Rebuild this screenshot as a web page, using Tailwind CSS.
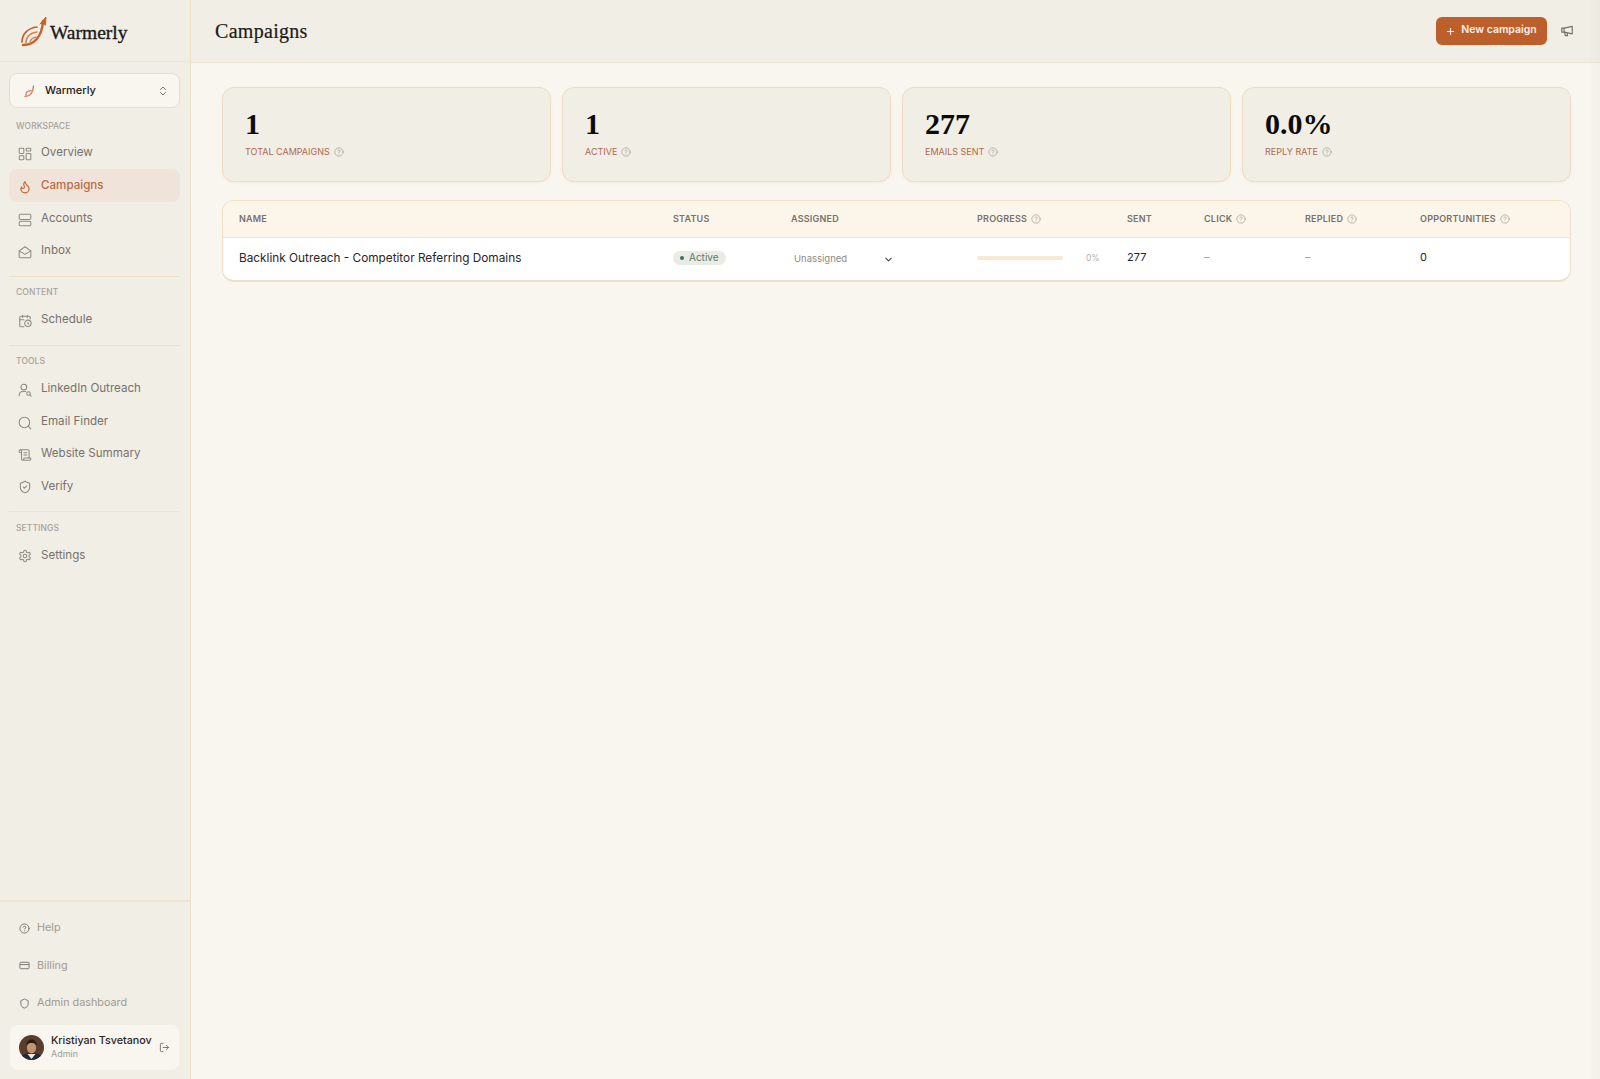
<!DOCTYPE html>
<html lang="en">
<head>
<meta charset="UTF-8" />
<title>Campaigns</title>
<script src="https://cdn.jsdelivr.net/npm/@tailwindcss/browser@4"></script>
</head>
<body class="relative h-[1079px] overflow-hidden bg-[#f9f6f0] font-['Inter',sans-serif] text-[#1c1917]">
<div class="flex h-full">
	<!-- Sidebar -->
	<aside class="flex w-[191px] shrink-0 flex-col border-r border-[#efdfc9] bg-[#f1eee6]">
		<div class="flex h-[62px] items-center gap-[2px] border-b border-[#ece4d5] pl-[20px] pt-[1px]">
			<svg class="h-[32px] w-[28px]" viewBox="0 0 28 32" fill="none" stroke-linecap="round">
				<path d="M3 30C14 30 22 22 23 6" stroke="#c2622d" stroke-width="2.4"/>
				<path d="M20 9l6-7-.5 8" fill="#c2622d" stroke="#c2622d" stroke-width="1"/>
				<path d="M2 27C2 19 8 13 17 12" stroke="#c2622d" stroke-width="1.7"/>
				<path d="M6 28C6 22 10 18 17 17" stroke="#d98556" stroke-width="1.5"/>
				<path d="M10 28C10 25 12 23 16 22" stroke="#d98556" stroke-width="1.3"/>
			</svg>
			<span class="mt-[3px] font-['Liberation_Serif',serif] text-[19.5px] leading-none text-[#1c1917] [-webkit-text-stroke:0.35px_#1c1917]">Warmerly</span>
		</div>

		<div class="flex flex-1 flex-col pl-[9px] pr-[10px] pt-[11px]">
			<button class="flex h-[35px] shrink-0 items-center rounded-lg border border-[#efdcc3] bg-[#f9f6f0] pl-[13px] pr-[10px] text-[11px] font-medium">
				<svg class="h-[14px] w-[14px]" viewBox="0 0 14 14" fill="none" stroke="#dc8466" stroke-linecap="round"><path d="M2 12.5C7 12.5 10 9 10.5 2" stroke-width="1.5"/><path d="M3 11.5C2.5 8.5 4.5 7 8 6.5" stroke-width="1.3"/></svg>
				<span class="mb-[1px] ml-[8px]">Warmerly</span>
				<svg class="ml-auto h-[12px] w-[12px]" viewBox="0 0 24 24" fill="none" stroke="#78716c" stroke-width="2" stroke-linecap="round" stroke-linejoin="round"><path d="m7 15 5 5 5-5"/><path d="m7 9 5-5 5 5"/></svg>
			</button>

			<div class="mt-[12px] pl-[7px] text-[8.5px] font-medium leading-[12px] tracking-[0.01em] text-[#a8a299]">WORKSPACE</div>
			<nav class="mt-[5px] flex flex-col gap-[0.4px] text-[11.6px] text-[#78716c]">
				<a class="flex h-[32px] items-center gap-[9px] pl-[9px]">
					<svg class="mt-[2px] h-[14px] w-[14px]" viewBox="0 0 24 24" fill="none" stroke="#8f8a82" stroke-width="1.8"><rect x="2" y="2" width="8" height="9" rx="1.5"/><rect x="14" y="2" width="8" height="5" rx="1.5"/><rect x="14" y="11" width="8" height="11" rx="1.5"/><rect x="2" y="15" width="8" height="7" rx="1.5"/></svg>
					Overview</a>
				<a class="flex h-[33px] items-center gap-[9px] rounded-lg bg-[#f0e4da] pl-[9px] font-medium text-[#bd6a45]">
					<svg class="mt-[2px] h-[14px] w-[14px]" viewBox="0 0 24 24" fill="none" stroke="#c2622d" stroke-width="2" stroke-linecap="round" stroke-linejoin="round"><path d="M8.5 14.5A2.5 2.5 0 0 0 11 12c0-1.38-.5-2-1-3-1.07-2.14-.22-4.05 2-6 .5 2.5 2 4.9 4 6.5 2 1.6 3 3.5 3 5.500a7 7 0 1 1-14 0c0-1.150.43-2.290 1-3a2.500 2.500 0 0 0 2.500 2.500z"/></svg>
					Campaigns</a>
				<a class="flex h-[32px] items-center gap-[9px] pl-[9px]">
					<svg class="mt-[2px] h-[14px] w-[14px]" viewBox="0 0 24 24" fill="none" stroke="#8f8a82" stroke-width="1.8"><rect x="2" y="2" width="20" height="9" rx="2.500"/><rect x="2" y="14" width="20" height="8" rx="2.500"/></svg>
					Accounts</a>
				<a class="flex h-[32px] items-center gap-[9px] pl-[9px]">
					<svg class="mt-[2px] h-[14px] w-[14px]" viewBox="0 0 24 24" fill="none" stroke="#8f8a82" stroke-width="1.8" stroke-linejoin="round"><path d="M2 10 12 3l10 7v10a2 2 0 0 1-2 2H4a2 2 0 0 1-2-2z"/><path d="m2 10 10 6 10-6"/></svg>
					Inbox</a>
			</nav>

			<div class="mt-[9px] border-t border-[#efdfc9]"></div>
			<div class="mt-[9px] pl-[7px] text-[8.5px] font-medium leading-[12px] tracking-[0.01em] text-[#a8a299]">CONTENT</div>
			<nav class="mt-[6px] text-[11.6px] text-[#78716c]">
				<a class="flex h-[32px] items-center gap-[9px] pl-[9px]">
					<svg class="mt-[2px] h-[14px] w-[14px]" viewBox="0 0 24 24" fill="none" stroke="#8f8a82" stroke-width="1.8" stroke-linecap="round" stroke-linejoin="round"><path d="M21 8V6a2 2 0 0 0-2-2H5a2 2 0 0 0-2 2v14a2 2 0 0 0 2 2h5"/><path d="M16 2v4M8 2v4M3 10h7"/><circle cx="17" cy="16" r="5.500"/><path d="M17 14v2.200l1.500 1"/></svg>
					Schedule</a>
			</nav>

			<div class="mt-[9px] border-t border-[#efdfc9]"></div>
			<div class="mt-[9px] pl-[7px] text-[8.5px] font-medium leading-[12px] tracking-[0.01em] text-[#a8a299]">TOOLS</div>
			<nav class="mt-[6px] flex flex-col gap-[0.4px] text-[11.6px] text-[#78716c]">
				<a class="flex h-[32px] items-center gap-[9px] pl-[9px]">
					<svg class="mt-[2px] h-[14px] w-[14px]" viewBox="0 0 24 24" fill="none" stroke="#8f8a82" stroke-width="1.8" stroke-linecap="round"><circle cx="10" cy="7" r="5"/><path d="M2 22c0-5 3-8 8-8 1 0 2 .1 3 .5"/><circle cx="18" cy="18" r="3"/><path d="m20.500 20.500 2 2"/></svg>
					LinkedIn Outreach</a>
				<a class="flex h-[32px] items-center gap-[9px] pl-[9px]">
					<svg class="mt-[2px] h-[14px] w-[14px]" viewBox="0 0 24 24" fill="none" stroke="#8f8a82" stroke-width="1.8" stroke-linecap="round"><circle cx="11" cy="11" r="9"/><path d="m22 22-4.500-4.500"/></svg>
					Email Finder</a>
				<a class="flex h-[32px] items-center gap-[9px] pl-[9px]">
					<svg class="mt-[2px] h-[14px] w-[14px]" viewBox="0 0 24 24" fill="none" stroke="#8f8a82" stroke-width="1.8" stroke-linecap="round" stroke-linejoin="round"><path d="M15 12h-5M15 8h-5M19 17V5a2 2 0 0 0-2-2H4"/><path d="M8 21h12a2 2 0 0 0 2-2v-1a1 1 0 0 0-1-1H11a1 1 0 0 0-1 1v1a2 2 0 1 1-4 0V5a2 2 0 1 0-4 0v2a1 1 0 0 0 1 1h3"/></svg>
					Website Summary</a>
				<a class="flex h-[32px] items-center gap-[9px] pl-[9px]">
					<svg class="mt-[2px] h-[14px] w-[14px]" viewBox="0 0 24 24" fill="none" stroke="#8f8a82" stroke-width="1.8" stroke-linecap="round" stroke-linejoin="round"><path d="M20 13c0 5-3.500 7.500-7.660 8.950a1 1 0 0 1-.67-.01C7.500 20.500 4 18 4 13V6a1 1 0 0 1 1-1c2 0 4.500-1.200 6.240-2.720a1.170 1.170 0 0 1 1.520 0C14.510 3.810 17 5 19 5a1 1 0 0 1 1 1z"/><path d="m9 12 2 2 4-4"/></svg>
					Verify</a>
			</nav>

			<div class="mt-[9px] border-t border-[#ece4d5]"></div>
			<div class="mt-[10px] pl-[7px] text-[8.5px] font-medium leading-[12px] tracking-[0.01em] text-[#a8a299]">SETTINGS</div>
			<nav class="mt-[5px] text-[11.6px] text-[#78716c]">
				<a class="flex h-[32px] items-center gap-[9px] pl-[9px]">
					<svg class="mt-[2px] h-[14px] w-[14px]" viewBox="0 0 24 24" fill="none" stroke="#8f8a82" stroke-width="1.8" stroke-linecap="round" stroke-linejoin="round"><path d="M12.220 2h-.44a2 2 0 0 0-2 2v.18a2 2 0 0 1-1 1.730l-.43.25a2 2 0 0 1-2 0l-.15-.08a2 2 0 0 0-2.730.73l-.22.380a2 2 0 0 0 .73 2.730l.15.1a2 2 0 0 1 1 1.720v.51a2 2 0 0 1-1 1.740l-.15.09a2 2 0 0 0-.73 2.730l.22.380a2 2 0 0 0 2.730.73l.15-.08a2 2 0 0 1 2 0l.43.25a2 2 0 0 1 1 1.730V20a2 2 0 0 0 2 2h.44a2 2 0 0 0 2-2v-.18a2 2 0 0 1 1-1.730l.43-.25a2 2 0 0 1 2 0l.15.08a2 2 0 0 0 2.730-.73l.22-.390a2 2 0 0 0-.73-2.730l-.15-.08a2 2 0 0 1-1-1.740v-.5a2 2 0 0 1 1-1.740l.15-.09a2 2 0 0 0 .73-2.730l-.22-.380a2 2 0 0 0-2.730-.73l-.15.08a2 2 0 0 1-2 0l-.43-.25a2 2 0 0 1-1-1.730V4a2 2 0 0 0-2-2z"/><circle cx="12" cy="12" r="3"/></svg>
					Settings</a>
			</nav>
		</div>

		<div class="border-t-2 border-[#f1e3d2] pl-[10px] pr-[11px] pb-[9px]">
			<div class="flex flex-col text-[10.8px] text-[#a09a90]">
				<a class="flex h-[37.500px] items-center gap-[7px] pl-[9px] pt-[16px]">
					<svg class="h-[11px] w-[11px]" viewBox="0 0 24 24" fill="none" stroke="#78716c" stroke-width="2" stroke-linecap="round"><circle cx="12" cy="12" r="10"/><path d="M9.100 9a3 3 0 0 1 5.800 1c0 2-3 3-3 3M12 17h.01"/></svg>
					Help</a>
				<a class="flex h-[37.500px] items-center gap-[7px] pl-[9px] pt-[16px]">
					<svg class="h-[11px] w-[11px]" viewBox="0 0 24 24" fill="none" stroke="#78716c" stroke-width="2"><rect x="2" y="5" width="20" height="14" rx="2"/><path d="M2 10h20"/></svg>
					Billing</a>
				<a class="flex h-[37.500px] items-center gap-[7px] pl-[9px] pt-[16px]">
					<svg class="h-[11px] w-[11px]" viewBox="0 0 24 24" fill="none" stroke="#78716c" stroke-width="2" stroke-linejoin="round"><path d="M20 13c0 5-3.500 7.500-7.660 8.950a1 1 0 0 1-.67-.01C7.500 20.500 4 18 4 13V6a1 1 0 0 1 1-1c2 0 4.500-1.200 6.240-2.720a1.170 1.170 0 0 1 1.520 0C14.510 3.810 17 5 19 5a1 1 0 0 1 1 1z"/></svg>
					Admin dashboard</a>
			</div>
			<div class="mt-[11px] flex h-[45px] items-center rounded-lg bg-[#f9f6f0] pl-[9px] pr-[9px]">
				<svg class="h-[25px] w-[25px] shrink-0 rounded-full" viewBox="0 0 25 25"><rect width="25" height="25" fill="#5b3d2c"/><path d="M0 25c1-5 6-7 12.500-7s11.500 2 12.500 7z" fill="#1f2b3a"/><path d="M8.500 19l4 5 4-5z" fill="#ece7df"/><ellipse cx="12.500" cy="12.500" rx="4.600" ry="6" fill="#c4936f"/><path d="M7.500 11c-.5-4 2-6.500 5-6.500s5.500 2.500 5 6.500c-1-2.500-3-3-5-3s-4 .5-5 3z" fill="#2b1b14"/></svg>
				<div class="mb-[2px] ml-[7px] min-w-0 leading-none">
					<div class="whitespace-nowrap text-[10.7px] font-medium leading-[14px] text-[#292524]">Kristiyan Tsvetanov</div>
					<div class="text-[9px] leading-[12px] text-[#a09a90]">Admin</div>
				</div>
				<svg class="ml-auto h-[11px] w-[11px] shrink-0" viewBox="0 0 24 24" fill="none" stroke="#78716c" stroke-width="2" stroke-linecap="round" stroke-linejoin="round"><path d="M9 21H5a2 2 0 0 1-2-2V5a2 2 0 0 1 2-2h4"/><path d="m16 17 5-5-5-5M21 12H9"/></svg>
			</div>
		</div>
	</aside>

	<!-- Main -->
	<main class="flex min-w-0 flex-1 flex-col">
		<header class="flex h-[63px] shrink-0 items-center justify-between border-b border-[#ece4d5] bg-[#f1eee6] pl-[24px] pr-[26px]">
			<h1 class="font-['Liberation_Serif',serif] text-[20px] tracking-[0.015em] text-[#1c1917] [-webkit-text-stroke:0.2px_#1c1917]">Campaigns</h1>
			<div class="flex items-center gap-[13px]">
				<button class="flex h-[28px] w-[111px] items-center justify-center gap-[6px] rounded-md bg-[#bd5f2b] text-[10.5px] font-semibold text-[#fbf4ec]">
					<svg class="mt-[1px] h-[9px] w-[9px]" viewBox="0 0 10 10" fill="none" stroke="#fbf4ec" stroke-width="1.200"><path d="M5 1v8M1 5h8"/></svg>
					<span class="mb-[2px]">New campaign</span></button>
				<svg class="h-[14px] w-[14px]" viewBox="0 0 24 24" fill="none" stroke="#78716c" stroke-width="2" stroke-linecap="round" stroke-linejoin="round"><path d="m21 4-14 3H3v7h4l14 3z"/><path d="M7 7v7M8 14l1 6h4l-1-5"/></svg>
			</div>
		</header>

		<div class="flex flex-1 flex-col gap-[18px] pl-[31px] pr-[29px] pt-[24px]">
			<!-- Stat cards -->
			<div class="grid grid-cols-4 gap-[11px]">
				<div class="h-[95px] rounded-[12px] border border-[#efdcc3] bg-[#f1eee6] pl-[22px] pt-[19px] shadow-sm shadow-[#f1e3d2]/40">
					<div class="-mt-[1px] font-['Liberation_Serif',serif] text-[30px] font-bold leading-[36px] text-[#0c0a09]">1</div>
					<div class="mt-[3px] flex items-center gap-[4px] text-[9px] text-[#b0694a]">TOTAL CAMPAIGNS
						<svg class="h-[10px] w-[10px]" viewBox="0 0 24 24" fill="none" stroke="#a8a299" stroke-width="1.800" stroke-linecap="round"><circle cx="12" cy="12" r="10"/><path d="M9.100 9a3 3 0 0 1 5.800 1c0 2-3 3-3 3M12 17h.01"/></svg></div>
				</div>
				<div class="h-[95px] rounded-[12px] border border-[#efdcc3] bg-[#f1eee6] pl-[22px] pt-[19px] shadow-sm shadow-[#f1e3d2]/40">
					<div class="-mt-[1px] font-['Liberation_Serif',serif] text-[30px] font-bold leading-[36px] text-[#0c0a09]">1</div>
					<div class="mt-[3px] flex items-center gap-[4px] text-[9px] text-[#b0694a]">ACTIVE
						<svg class="h-[10px] w-[10px]" viewBox="0 0 24 24" fill="none" stroke="#a8a299" stroke-width="1.800" stroke-linecap="round"><circle cx="12" cy="12" r="10"/><path d="M9.100 9a3 3 0 0 1 5.800 1c0 2-3 3-3 3M12 17h.01"/></svg></div>
				</div>
				<div class="h-[95px] rounded-[12px] border border-[#efdcc3] bg-[#f1eee6] pl-[22px] pt-[19px] shadow-sm shadow-[#f1e3d2]/40">
					<div class="-mt-[1px] font-['Liberation_Serif',serif] text-[30px] font-bold leading-[36px] text-[#0c0a09]">277</div>
					<div class="mt-[3px] flex items-center gap-[4px] text-[9px] text-[#b0694a]">EMAILS SENT
						<svg class="h-[10px] w-[10px]" viewBox="0 0 24 24" fill="none" stroke="#a8a299" stroke-width="1.800" stroke-linecap="round"><circle cx="12" cy="12" r="10"/><path d="M9.100 9a3 3 0 0 1 5.800 1c0 2-3 3-3 3M12 17h.01"/></svg></div>
				</div>
				<div class="h-[95px] rounded-[12px] border border-[#efdcc3] bg-[#f1eee6] pl-[22px] pt-[19px] shadow-sm shadow-[#f1e3d2]/40">
					<div class="-mt-[1px] font-['Liberation_Serif',serif] text-[30px] font-bold leading-[36px] text-[#0c0a09]">0.0%</div>
					<div class="mt-[3px] flex items-center gap-[4px] text-[9px] text-[#b0694a]">REPLY RATE
						<svg class="h-[10px] w-[10px]" viewBox="0 0 24 24" fill="none" stroke="#a8a299" stroke-width="1.800" stroke-linecap="round"><circle cx="12" cy="12" r="10"/><path d="M9.100 9a3 3 0 0 1 5.800 1c0 2-3 3-3 3M12 17h.01"/></svg></div>
				</div>
			</div>

			<!-- Table -->
			<div class="overflow-hidden rounded-[12px] border border-b-2 border-[#f0dfc8] bg-white">
				<div class="grid h-[37px] grid-cols-[434px_118px_186px_150px_77px_101px_115px_1fr] items-center border-b border-[#f3e6d6] bg-[#fcf5ea] pl-[16px] text-[9px] font-semibold tracking-[0.025em] text-[#78716c]">
					<div>NAME</div>
					<div>STATUS</div>
					<div>ASSIGNED</div>
					<div class="flex items-center gap-[4px]">PROGRESS
						<svg class="h-[10px] w-[10px]" viewBox="0 0 24 24" fill="none" stroke="#a8a299" stroke-width="1.800" stroke-linecap="round"><circle cx="12" cy="12" r="10"/><path d="M9.100 9a3 3 0 0 1 5.800 1c0 2-3 3-3 3M12 17h.01"/></svg></div>
					<div>SENT</div>
					<div class="flex items-center gap-[4px]">CLICK
						<svg class="h-[10px] w-[10px]" viewBox="0 0 24 24" fill="none" stroke="#a8a299" stroke-width="1.800" stroke-linecap="round"><circle cx="12" cy="12" r="10"/><path d="M9.100 9a3 3 0 0 1 5.800 1c0 2-3 3-3 3M12 17h.01"/></svg></div>
					<div class="flex items-center gap-[4px]">REPLIED
						<svg class="h-[10px] w-[10px]" viewBox="0 0 24 24" fill="none" stroke="#a8a299" stroke-width="1.800" stroke-linecap="round"><circle cx="12" cy="12" r="10"/><path d="M9.100 9a3 3 0 0 1 5.800 1c0 2-3 3-3 3M12 17h.01"/></svg></div>
					<div class="flex items-center gap-[4px]">OPPORTUNITIES
						<svg class="h-[10px] w-[10px]" viewBox="0 0 24 24" fill="none" stroke="#a8a299" stroke-width="1.800" stroke-linecap="round"><circle cx="12" cy="12" r="10"/><path d="M9.100 9a3 3 0 0 1 5.800 1c0 2-3 3-3 3M12 17h.01"/></svg></div>
				</div>
				<div class="grid h-[42px] grid-cols-[434px_118px_186px_150px_77px_101px_115px_1fr] items-center pl-[16px] text-[11px] text-[#292524]">
					<div class="text-[11.8px]">Backlink Outreach - Competitor Referring Domains</div>
					<div class="mb-[3px] flex"><span class="flex h-[14px] items-center gap-[5px] rounded-full bg-[#e9ece6] px-[7px] text-[10px] text-[#5d7a68]"><span class="h-[4px] w-[4px] rounded-full bg-[#3f7358]"></span>Active</span></div>
					<div class="flex w-[103px] items-center justify-between pl-[3px] text-[9.500px] text-[#8f8a82]">Unassigned
						<svg class="h-[11px] w-[11px]" viewBox="0 0 24 24" fill="none" stroke="#44403c" stroke-width="2.200" stroke-linecap="round" stroke-linejoin="round"><path d="m6 9 6 6 6-6"/></svg></div>
					<div class="mb-[2px] flex items-center"><span class="h-[4px] w-[86px] rounded-full bg-[#f7e9d3]"></span><span class="ml-[23px] text-[8.500px] text-[#b5b0a7]">0%</span></div>
					<div class="mb-[4px]">277</div>
					<div class="mb-[3px] text-[#a8a299]">–</div>
					<div class="mb-[3px] text-[#a8a299]">–</div>
					<div class="mb-[4px]">0</div>
				</div>
			</div>
		</div>
	</main>
</div>
<!-- faint shade at the right edge -->
<div class="pointer-events-none absolute inset-y-0 right-0 w-[12px] bg-gradient-to-r from-transparent to-black/[0.025]"></div>
</body>
</html>
